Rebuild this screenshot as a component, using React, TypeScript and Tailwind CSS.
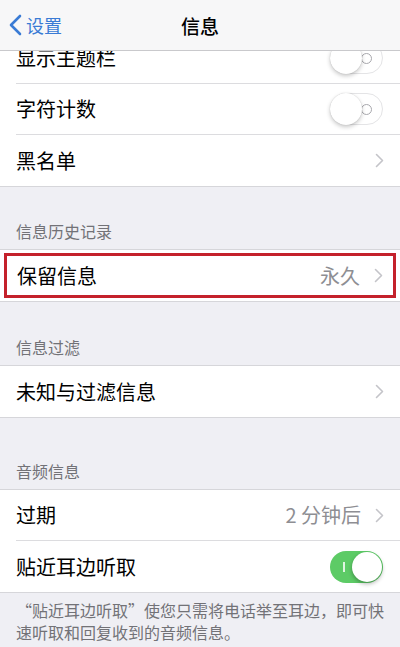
import React from "react";

const font = { fontFamily: '"Noto Sans CJK SC", "Noto Sans", sans-serif' };

function Chevron() {
  return (
    <svg width="9" height="15" viewBox="0 0 9 15" className="shrink-0">
      <path d="M1.5 1.5 L7.5 7.5 L1.5 13.5" fill="none" stroke="#c4c4c9" strokeWidth="1.6" strokeLinecap="round" strokeLinejoin="round" />
    </svg>
  );
}

function ToggleOff() {
  return (
    <div className="relative w-[53px] h-[32px] rounded-full bg-white border border-[#e4e4e6] shrink-0">
      <div className="absolute right-[10px] top-[10px] w-[11px] h-[11px] rounded-full border border-[#a8a8ad]" />
      <div className="absolute left-[-1px] top-[-1px] w-[32px] h-[32px] rounded-full bg-white shadow-[0_2px_4px_rgba(0,0,0,0.22),0_0_1px_rgba(0,0,0,0.2)]" />
    </div>
  );
}

function ToggleOn() {
  return (
    <div className="relative w-[53px] h-[32px] rounded-full bg-[#5dcb66] shrink-0">
      <div className="absolute left-[13px] top-[11px] w-[1.5px] h-[10px] bg-white/80" />
      <div className="absolute right-[1px] top-[1px] w-[30px] h-[30px] rounded-full bg-white shadow-[0_2px_4px_rgba(0,0,0,0.3)]" />
    </div>
  );
}

function Row({ label, right, last }: { label: string; right?: React.ReactNode; last?: boolean }) {
  return (
    <div className="pl-4 bg-white">
      <div className={`flex items-center h-[51px] pr-4 ${last ? "" : "border-b border-[#dcdcdf]"}`}>
        <span className="flex-1 text-[20px] text-black leading-none">{label}</span>
        {right}
      </div>
    </div>
  );
}

function Header({ text, h }: { text: string; h: string }) {
  return (
    <div className={`flex items-end px-4 pb-[10px] border-b border-[#d6d6da] ${h}`}>
      <span className="text-[16px] text-[#727277] leading-none">{text}</span>
    </div>
  );
}

function Value({ text }: { text: string }) {
  return (
    <div className="flex items-center gap-[14px]">
      <span className="text-[20px] text-[#8e8e93] leading-none">{text}</span>
      <Chevron />
    </div>
  );
}

export default function App() {
  return (
    <div className="w-[400px] h-[647px] overflow-hidden bg-[#efeff4]" style={font}>
      <div className="relative h-[51px] bg-[#f7f7f8] border-b border-[#c9c9cc] flex items-center">
        <div className="flex items-center pl-[9px] gap-[4px] text-[#3a7bd5]">
          <svg width="13" height="22" viewBox="0 0 13 22">
            <path d="M11 2 L2 11 L11 20" fill="none" stroke="#3a7bd5" strokeWidth="2.6" strokeLinecap="round" strokeLinejoin="round" />
          </svg>
          <span className="text-[18px] leading-none">设置</span>
        </div>
        <div className="absolute inset-0 flex items-center justify-center">
          <span className="text-[19px] font-medium text-black leading-none">信息</span>
        </div>
      </div>

      <div className="bg-white">
        <div className="h-[33px] overflow-hidden flex flex-col justify-end">
          <div className="pl-4 shrink-0">
            <div className="flex items-center h-[51px] pr-[17px] border-b border-[#dcdcdf]">
              <span className="flex-1 text-[20px] text-black leading-none">显示主题栏</span>
              <ToggleOff />
            </div>
          </div>
        </div>
        <div className="pl-4">
          <div className="flex items-center h-[51px] pr-[17px] border-b border-[#dcdcdf]">
            <span className="flex-1 text-[20px] text-black leading-none">字符计数</span>
            <ToggleOff />
          </div>
        </div>
        <Row label="黑名单" right={<Chevron />} last />
      </div>
      <div className="border-t border-[#d6d6da]" />

      <Header text="信息历史记录" h="h-[63px]" />
      <div className="bg-white px-[4px] py-[3px] border-b border-[#d6d6da]">
        <div className="flex items-center h-[45px] border-[3px] border-[#c4212b] pl-[10px] pr-[10px]">
          <span className="flex-1 text-[20px] text-black leading-none">保留信息</span>
          <Value text="永久" />
        </div>
      </div>

      <Header text="信息过滤" h="h-[64px]" />
      <Row label="未知与过滤信息" right={<Chevron />} last />
      <div className="border-t border-[#d6d6da]" />

      <Header text="音频信息" h="h-[72px]" />
      <div className="bg-white">
        <Row label="过期" right={<Value text="2 分钟后" />} />
        <div className="pl-4">
          <div className="flex items-center h-[51px] pr-[17px]">
            <span className="flex-1 text-[20px] text-black leading-none">贴近耳边听取</span>
            <ToggleOn />
          </div>
        </div>
      </div>
      <div className="border-t border-[#d6d6da]" />
      <div className="px-4 pt-[6px] text-[16px] leading-[22px] text-[#727277]">
        “贴近耳边听取”使您只需将电话举至耳边，即可快速听取和回复收到的音频信息。
      </div>
    </div>
  );
}
